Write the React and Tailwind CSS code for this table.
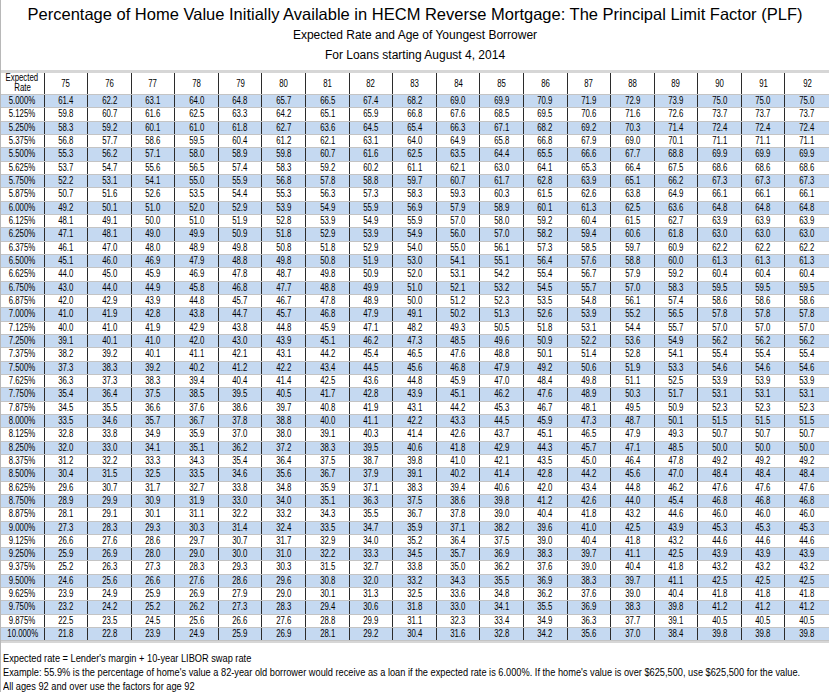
import React from 'react'

const AGES = [75, 76, 77, 78, 79, 80, 81, 82, 83, 84, 85, 86, 87, 88, 89, 90, 91, 92]

// one line per expected rate, 5.000% .. 10.000% in 0.125 steps
const PLF = `
61.4 62.2 63.1 64.0 64.8 65.7 66.5 67.4 68.2 69.0 69.9 70.9 71.9 72.9 73.9 75.0 75.0 75.0
59.8 60.7 61.6 62.5 63.3 64.2 65.1 65.9 66.8 67.6 68.5 69.5 70.6 71.6 72.6 73.7 73.7 73.7
58.3 59.2 60.1 61.0 61.8 62.7 63.6 64.5 65.4 66.3 67.1 68.2 69.2 70.3 71.4 72.4 72.4 72.4
56.8 57.7 58.6 59.5 60.4 61.2 62.1 63.1 64.0 64.9 65.8 66.8 67.9 69.0 70.1 71.1 71.1 71.1
55.3 56.2 57.1 58.0 58.9 59.8 60.7 61.6 62.5 63.5 64.4 65.5 66.6 67.7 68.8 69.9 69.9 69.9
53.7 54.7 55.6 56.5 57.4 58.3 59.2 60.2 61.1 62.1 63.0 64.1 65.3 66.4 67.5 68.6 68.6 68.6
52.2 53.1 54.1 55.0 55.9 56.8 57.8 58.8 59.7 60.7 61.7 62.8 63.9 65.1 66.2 67.3 67.3 67.3
50.7 51.6 52.6 53.5 54.4 55.3 56.3 57.3 58.3 59.3 60.3 61.5 62.6 63.8 64.9 66.1 66.1 66.1
49.2 50.1 51.0 52.0 52.9 53.9 54.9 55.9 56.9 57.9 58.9 60.1 61.3 62.5 63.6 64.8 64.8 64.8
48.1 49.1 50.0 51.0 51.9 52.8 53.9 54.9 55.9 57.0 58.0 59.2 60.4 61.5 62.7 63.9 63.9 63.9
47.1 48.1 49.0 49.9 50.9 51.8 52.9 53.9 54.9 56.0 57.0 58.2 59.4 60.6 61.8 63.0 63.0 63.0
46.1 47.0 48.0 48.9 49.8 50.8 51.8 52.9 54.0 55.0 56.1 57.3 58.5 59.7 60.9 62.2 62.2 62.2
45.1 46.0 46.9 47.9 48.8 49.8 50.8 51.9 53.0 54.1 55.1 56.4 57.6 58.8 60.0 61.3 61.3 61.3
44.0 45.0 45.9 46.9 47.8 48.7 49.8 50.9 52.0 53.1 54.2 55.4 56.7 57.9 59.2 60.4 60.4 60.4
43.0 44.0 44.9 45.8 46.8 47.7 48.8 49.9 51.0 52.1 53.2 54.5 55.7 57.0 58.3 59.5 59.5 59.5
42.0 42.9 43.9 44.8 45.7 46.7 47.8 48.9 50.0 51.2 52.3 53.5 54.8 56.1 57.4 58.6 58.6 58.6
41.0 41.9 42.8 43.8 44.7 45.7 46.8 47.9 49.1 50.2 51.3 52.6 53.9 55.2 56.5 57.8 57.8 57.8
40.0 41.0 41.9 42.9 43.8 44.8 45.9 47.1 48.2 49.3 50.5 51.8 53.1 54.4 55.7 57.0 57.0 57.0
39.1 40.1 41.0 42.0 43.0 43.9 45.1 46.2 47.3 48.5 49.6 50.9 52.2 53.6 54.9 56.2 56.2 56.2
38.2 39.2 40.1 41.1 42.1 43.1 44.2 45.4 46.5 47.6 48.8 50.1 51.4 52.8 54.1 55.4 55.4 55.4
37.3 38.3 39.2 40.2 41.2 42.2 43.4 44.5 45.6 46.8 47.9 49.2 50.6 51.9 53.3 54.6 54.6 54.6
36.3 37.3 38.3 39.4 40.4 41.4 42.5 43.6 44.8 45.9 47.0 48.4 49.8 51.1 52.5 53.9 53.9 53.9
35.4 36.4 37.5 38.5 39.5 40.5 41.7 42.8 43.9 45.1 46.2 47.6 48.9 50.3 51.7 53.1 53.1 53.1
34.5 35.5 36.6 37.6 38.6 39.7 40.8 41.9 43.1 44.2 45.3 46.7 48.1 49.5 50.9 52.3 52.3 52.3
33.5 34.6 35.7 36.7 37.8 38.8 40.0 41.1 42.2 43.3 44.5 45.9 47.3 48.7 50.1 51.5 51.5 51.5
32.8 33.8 34.9 35.9 37.0 38.0 39.1 40.3 41.4 42.6 43.7 45.1 46.5 47.9 49.3 50.7 50.7 50.7
32.0 33.0 34.1 35.1 36.2 37.2 38.3 39.5 40.6 41.8 42.9 44.3 45.7 47.1 48.5 50.0 50.0 50.0
31.2 32.2 33.3 34.3 35.4 36.4 37.5 38.7 39.8 41.0 42.1 43.5 45.0 46.4 47.8 49.2 49.2 49.2
30.4 31.5 32.5 33.5 34.6 35.6 36.7 37.9 39.1 40.2 41.4 42.8 44.2 45.6 47.0 48.4 48.4 48.4
29.6 30.7 31.7 32.7 33.8 34.8 35.9 37.1 38.3 39.4 40.6 42.0 43.4 44.8 46.2 47.6 47.6 47.6
28.9 29.9 30.9 31.9 33.0 34.0 35.1 36.3 37.5 38.6 39.8 41.2 42.6 44.0 45.4 46.8 46.8 46.8
28.1 29.1 30.1 31.1 32.2 33.2 34.3 35.5 36.7 37.8 39.0 40.4 41.8 43.2 44.6 46.0 46.0 46.0
27.3 28.3 29.3 30.3 31.4 32.4 33.5 34.7 35.9 37.1 38.2 39.6 41.0 42.5 43.9 45.3 45.3 45.3
26.6 27.6 28.6 29.7 30.7 31.7 32.9 34.0 35.2 36.4 37.5 39.0 40.4 41.8 43.2 44.6 44.6 44.6
25.9 26.9 28.0 29.0 30.0 31.0 32.2 33.3 34.5 35.7 36.9 38.3 39.7 41.1 42.5 43.9 43.9 43.9
25.2 26.3 27.3 28.3 29.3 30.3 31.5 32.7 33.8 35.0 36.2 37.6 39.0 40.4 41.8 43.2 43.2 43.2
24.6 25.6 26.6 27.6 28.6 29.6 30.8 32.0 33.2 34.3 35.5 36.9 38.3 39.7 41.1 42.5 42.5 42.5
23.9 24.9 25.9 26.9 27.9 29.0 30.1 31.3 32.5 33.6 34.8 36.2 37.6 39.0 40.4 41.8 41.8 41.8
23.2 24.2 25.2 26.2 27.3 28.3 29.4 30.6 31.8 33.0 34.1 35.5 36.9 38.3 39.8 41.2 41.2 41.2
22.5 23.5 24.5 25.6 26.6 27.6 28.8 29.9 31.1 32.3 33.4 34.9 36.3 37.7 39.1 40.5 40.5 40.5
21.8 22.8 23.9 24.9 25.9 26.9 28.1 29.2 30.4 31.6 32.8 34.2 35.6 37.0 38.4 39.8 39.8 39.8
`
  .trim()
  .split('\n')
  .map(line => line.trim().split(/\s+/))

const rate = i => (5 + i * 0.125).toFixed(3) + '%'

// narrow spreadsheet type
function N({ children }) {
  return <span className="inline-block scale-x-[0.78]">{children}</span>
}

export default function App() {
  return (
    <div className="w-[829px] h-[692px] overflow-hidden bg-white text-black border-l border-[#b8b8b8] font-['Liberation_Sans',sans-serif]">
      {/* titles */}
      <div className="pt-[3px] text-center">
        <h1 className="text-[16.5px] leading-[22px] whitespace-nowrap">
          Percentage of Home Value Initially Available in HECM Reverse Mortgage: The Principal Limit Factor (PLF)
        </h1>
        <p className="text-[12px] leading-[20px]">Expected Rate and Age of Youngest Borrower</p>
        <p className="text-[12px] leading-[20px]">For Loans starting August 4, 2014</p>
      </div>

      {/* table */}
      <div className="mt-[5px] border-t-[3px] border-b-2 border-[#d6d6d6] text-[10px]">
        <div className="grid grid-cols-19 h-[22px] border-b border-[#c4c4c4]">
          <div className="border-r border-[#2b2b2b] flex flex-col items-center leading-[10px]">
            <N>Expected</N>
            <N>Rate</N>
          </div>
          {AGES.map((a, j) => (
            <div
              key={a}
              className={`flex items-center justify-center ${j < AGES.length - 1 ? 'border-r border-[#2b2b2b]' : ''}`}
            >
              <N>{a}</N>
            </div>
          ))}
        </div>

        {PLF.map((vals, i) => (
          <div
            key={i}
            className={`grid grid-cols-19 h-[13.33px] border-b border-[#c4c4c4] leading-[12px] ${
              i % 2 === 0 ? 'bg-[#c5d9f1]' : 'bg-white'
            }`}
          >
            <div className="border-r border-[#2b2b2b] text-center">
              <N>{rate(i)}</N>
            </div>
            {vals.map((v, j) => (
              <div
                key={j}
                className={`text-center ${j < vals.length - 1 ? 'border-r border-[#2b2b2b]' : ''}`}
              >
                <N>{v}</N>
              </div>
            ))}
          </div>
        ))}
      </div>

      {/* notes */}
      <div className="mt-[8px] pl-[2px] text-[11px] leading-[14px] whitespace-nowrap">
        <p className="origin-left scale-x-[0.84]">Expected rate = Lender's margin + 10-year LIBOR swap rate</p>
        <p className="origin-left scale-x-[0.84]">
          Example: 55.9% is the percentage of home's value a 82-year old borrower would receive as a loan if the
          expected rate is 6.000%. If the home's value is over $625,500, use $625,500 for the value.
        </p>
        <p className="origin-left scale-x-[0.84]">All ages 92 and over use the factors for age 92</p>
      </div>
    </div>
  )
}
